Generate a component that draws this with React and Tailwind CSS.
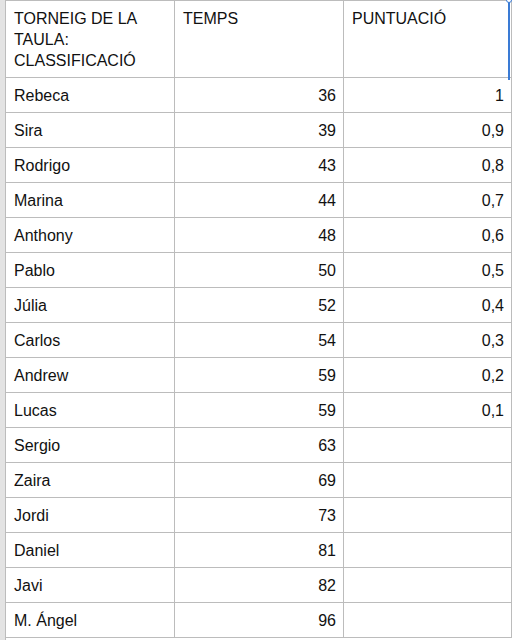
const rows = [
  ["Rebeca", "36", "1"],
  ["Sira", "39", "0,9"],
  ["Rodrigo", "43", "0,8"],
  ["Marina", "44", "0,7"],
  ["Anthony", "48", "0,6"],
  ["Pablo", "50", "0,5"],
  ["Júlia", "52", "0,4"],
  ["Carlos", "54", "0,3"],
  ["Andrew", "59", "0,2"],
  ["Lucas", "59", "0,1"],
  ["Sergio", "63", ""],
  ["Zaira", "69", ""],
  ["Jordi", "73", ""],
  ["Daniel", "81", ""],
  ["Javi", "82", ""],
  ["M. Ángel", "96", ""],
];

export default function App() {
  return (
    <div
      className="relative w-[512px] h-[640px] overflow-hidden bg-white flex text-[16px] text-[#111]"
      style={{ fontFamily: '"Liberation Sans", Arial, sans-serif' }}
    >
      <div className="w-[6px] shrink-0 bg-[#e3e3e3] border-r border-[#bcbcbc]" />
      <div className="flex-1 border-t border-[#bcbcbc]">
        <div className="flex h-[77px] border-b border-[#bcbcbc]">
          <div className="w-[169px] border-r border-[#bcbcbc] pl-[8px] pt-[7px] leading-[21px]">
            TORNEIG DE LA<br />TAULA:<br />CLASSIFICACIÓ
          </div>
          <div className="w-[169px] border-r border-[#bcbcbc] pl-[8px] pt-[7px] leading-[21px]">
            TEMPS
          </div>
          <div className="flex-1 border-r border-[#bcbcbc] pl-[8px] pt-[7px] leading-[21px]">
            PUNTUACIÓ
          </div>
        </div>
        {rows.map(([name, time, score]) => (
          <div key={name} className="flex h-[35px] border-b border-[#bcbcbc]">
            <div className="w-[169px] border-r border-[#bcbcbc] pl-[8px] pt-[2px] flex items-center">
              {name}
            </div>
            <div className="w-[169px] border-r border-[#bcbcbc] pr-[7px] pt-[2px] flex items-center justify-end">
              {time}
            </div>
            <div className="flex-1 border-r border-[#bcbcbc] pr-[7px] pt-[2px] flex items-center justify-end">
              {score}
            </div>
          </div>
        ))}
      </div>
      <div className="absolute left-[508px] top-0 w-[2px] h-[80px] bg-[#3a7bd5]" />
      <div className="absolute left-[506px] top-[-3px] w-[6px] h-[6px] rounded-full border border-[#3a7bd5] bg-white" />
    </div>
  );
}
